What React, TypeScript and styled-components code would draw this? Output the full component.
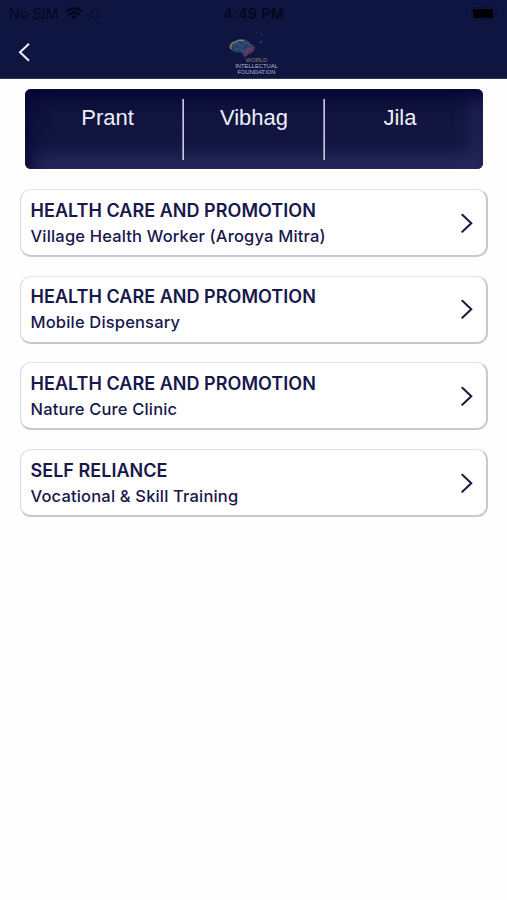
import React from "react";
import styled, { createGlobalStyle } from "styled-components";

const GlobalStyle = createGlobalStyle`
  * { box-sizing: border-box; }
  body { margin: 0; background: #fefefe; font-family: Inter, "Liberation Sans", sans-serif; }
`;

const Screen = styled.div`
  min-height: 900px;
  background: #fefefe;
  color: #17184c;
`;

const Header = styled.header`
  height: 79px;
  background: #0f1541;
  border-bottom: 1px solid #343858;
`;

const StatusBar = styled.div`
  display: grid;
  grid-template-columns: 1fr auto 1fr;
  align-items: center;
  height: 28px;
  padding: 0 9px;
  color: #05071c;
  font-size: 14px;
  line-height: 28px;
`;

const Carrier = styled.div`
  display: flex;
  align-items: center;
  gap: 6px;
  margin-top: -1px;
`;

const CarrierName = styled.span`
  letter-spacing: 0.25px;
`;

const Clock = styled.span`
  padding-left: 1px;
  font-weight: 600;
  letter-spacing: 0.5px;
`;

const Battery = styled.svg`
  justify-self: end;
  margin: -1px 1px 0 0;
`;

const NavBar = styled.div`
  display: grid;
  grid-template-columns: 1fr auto 1fr;
  height: 50px;
  padding: 0 18px;
`;

const BackButton = styled.button`
  display: flex;
  align-items: center;
  width: 14px;
  height: 48px;
  padding: 0;
  border: 0;
  background: none;
`;

const Brand = styled.div`
  display: flex;
  flex-direction: column;
  align-items: center;
  width: 54px;
  padding-top: 4px;
  margin-left: 6px;
`;

const BrandMark = styled.svg`
  display: block;
  margin-left: -14px;
`;

const BrandLine = styled.span<{ $tone: string }>`
  color: ${(p) => p.$tone};
  font: 5.8px/6px "Liberation Sans", Arial, sans-serif;
  white-space: nowrap;
`;

const Filters = styled.section`
  display: grid;
  grid-template-columns: 159px 141px 1fr;
  height: 80px;
  margin: 10px 24px 0 25px;
  padding: 10px 0 9px;
  border-radius: 6px;
  background: #11153f;
  box-shadow:
    inset 0 0 1px #3a3c66,
    inset 5px 8px 20px #00002e,
    inset -5px -8px 24px #34376a;
`;

const Filter = styled.div`
  display: flex;
  justify-content: center;
  padding: 6px 0 0 7px;
  color: #eeeefa;
  font: 22px/25px "Liberation Sans", Arial, sans-serif;

  & + & {
    padding-left: 0;
  }
  &:not(:last-child) {
    border-right: 1px solid #c6c8df;
    box-shadow: inset -1px 0 0 #8587a9;
  }
  &:last-child {
    padding-right: 8px;
  }
`;

const List = styled.main`
  display: flex;
  flex-direction: column;
  gap: 18.7px;
  padding: 20px 19px 0 20px;
`;

const Card = styled.article`
  display: flex;
  align-items: center;
  justify-content: space-between;
  height: 68px;
  padding: 0 13px 0 9.5px;
  border: 1px solid #d8d8df;
  border-top-color: #e4e4e8;
  border-right: 2px solid #c8c8d0;
  border-bottom: 2px solid #c8c8d2;
  border-radius: 11px;
  background: #fff;
`;

const CardText = styled.div`
  padding-top: 2px;
`;

const Title = styled.h2`
  margin: 0;
  font-size: 18px;
  font-weight: 600;
  line-height: 26px;
  letter-spacing: 0.03px;
`;

const Subtitle = styled.p`
  margin: -1px 0 1px;
  font-size: 16.5px;
  font-weight: 500;
  line-height: 26px;
  letter-spacing: 0.17px;
`;

const programs = [
  ["HEALTH CARE AND PROMOTION", "Village Health Worker (Arogya Mitra)"],
  ["HEALTH CARE AND PROMOTION", "Mobile Dispensary"],
  ["HEALTH CARE AND PROMOTION", "Nature Cure Clinic"],
  ["SELF RELIANCE", "Vocational & Skill Training"],
];

function WifiIcon() {
  return (
    <svg width="18" height="13" viewBox="0 0 18 13" fill="none" stroke="currentColor" strokeWidth="2.5">
      <path d="M.8 4.6Q9-2 17.2 4.6M3.6 7.8Q9 3.4 14.4 7.8" />
      <path d="m6 9.5 3 3 3-3Q9 7.4 6 9.5Z" fill="currentColor" stroke="none" />
    </svg>
  );
}

function LoadingIcon() {
  return (
    <svg width="12" height="12" viewBox="0 0 12 12" fill="none" stroke="#070a27" strokeWidth="1.3" strokeLinecap="round">
      <path d="M6 .7v2.5M9.7 2.2 8 4M11.3 6H8.7M9.7 9.8 8 8M6 11.3V8.7M2.3 9.8 4 8M.7 6h2.6M2.3 2.2 4 4" opacity=".7" />
    </svg>
  );
}

function BrainLogo() {
  return (
    <BrandMark width="44" height="25" viewBox="0 0 44 25" fill="none">
      <g transform="translate(0 1)">
        <path d="M3 17C0 14 2 9 7 8c6-4 14-1 16 3 4 1 5 5 2 7-1 3-4 3-6 3l-2 4-4-6c-4 1-7 0-10-2Z" fill="#293d6a" />
        <path d="M3 16c-2-4 2-7 5-7 2-2 5-2 8-1" stroke="#857862" strokeWidth="1.6" />
        <path d="m5 14 5-4 3 4 5-5 5 4M5 17l7-2 3 4 6-5" stroke="#365f79" strokeWidth="1" />
        <path d="m17 20 3-5 6-2v5l-6 3-3 4-2-5Z" fill="#593160" />
        <path d="m17 19 8-5M18 23l1-5" stroke="#76406b" />
      </g>
      <path d="M25 2h1M28 1h1M32 2h1M29 5h1M34 3h1" stroke="#394365" />
      <circle cx="33" cy="10" r=".7" fill="#8790a8" />
    </BrandMark>
  );
}

export default function App() {
  return (
    <>
      <GlobalStyle />
      <Screen>
        <Header>
          <StatusBar>
            <Carrier>
              <CarrierName>No SIM</CarrierName>
              <WifiIcon />
              <LoadingIcon />
            </Carrier>
            <Clock>4:49 PM</Clock>
            <Battery width="26" height="13" viewBox="0 0 26 13">
              <rect x=".5" y=".5" width="23" height="12" rx="3" fill="none" stroke="#0b1036" />
              <rect x="2" y="2" width="20" height="9" rx="1" fill="#000006" />
              <path d="M25 4v5" stroke="#0b1036" />
            </Battery>
          </StatusBar>
          <NavBar>
            <BackButton aria-label="Back">
              <svg width="12" height="20" viewBox="0 0 12 20" fill="none" stroke="#f0f1fa" strokeWidth="2">
                <path d="m11 1.7-9 8.5 9 8.5" />
              </svg>
            </BackButton>
            <Brand>
              <BrainLogo />
              <BrandLine $tone="#907b6c">WORLD</BrandLine>
              <BrandLine $tone="#b0b3c9">INTELLECTUAL</BrandLine>
              <BrandLine $tone="#b0b3c9">FOUNDATION</BrandLine>
            </Brand>
          </NavBar>
        </Header>
        <Filters>
          <Filter>Prant</Filter>
          <Filter>Vibhag</Filter>
          <Filter>Jila</Filter>
        </Filters>
        <List>
          {programs.map(([title, subtitle]) => (
            <Card key={subtitle}>
              <CardText>
                <Title>{title}</Title>
                <Subtitle>{subtitle}</Subtitle>
              </CardText>
              <svg width="12" height="20" viewBox="0 0 12 20" fill="none" stroke="#171744" strokeWidth="2" strokeLinecap="round">
                <path d="m1.3 1.7 9 8.5-9 8.5" />
              </svg>
            </Card>
          ))}
        </List>
      </Screen>
    </>
  );
}
